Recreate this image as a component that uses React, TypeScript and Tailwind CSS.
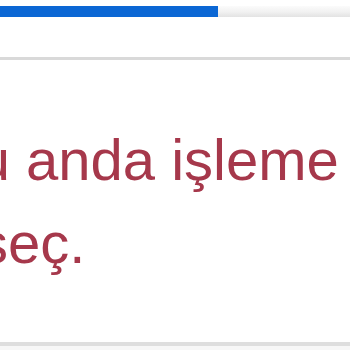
export default function App() {
  return (
    <div className="w-[350px] h-[350px] overflow-hidden bg-white flex flex-col" style={{ fontFamily: '"Liberation Sans", Arial, sans-serif' }}>
      <div className="mt-[6px] h-[11px] flex">
        <div className="w-[218px] h-full bg-[#0b67d4]" />
        <div className="flex-1 h-full bg-gradient-to-b from-[#fbfbfb] via-[#f2f2f2] to-[#e3e3e3]" />
      </div>
      <div className="mt-[40px] h-[3px] bg-[#d9d9d9]" />
      <div className="mt-[58px] text-[58px] leading-[83px] text-[#a6384b] whitespace-nowrap">
        <div className="ml-[-61px]">Şu anda işleme</div>
        <div className="ml-[-21px]">seç.</div>
      </div>
      <div className="mt-[58px] h-[4px] bg-[#dedede]" />
      <div className="flex-1 bg-[#f7f7f7]" />
    </div>
  );
}
